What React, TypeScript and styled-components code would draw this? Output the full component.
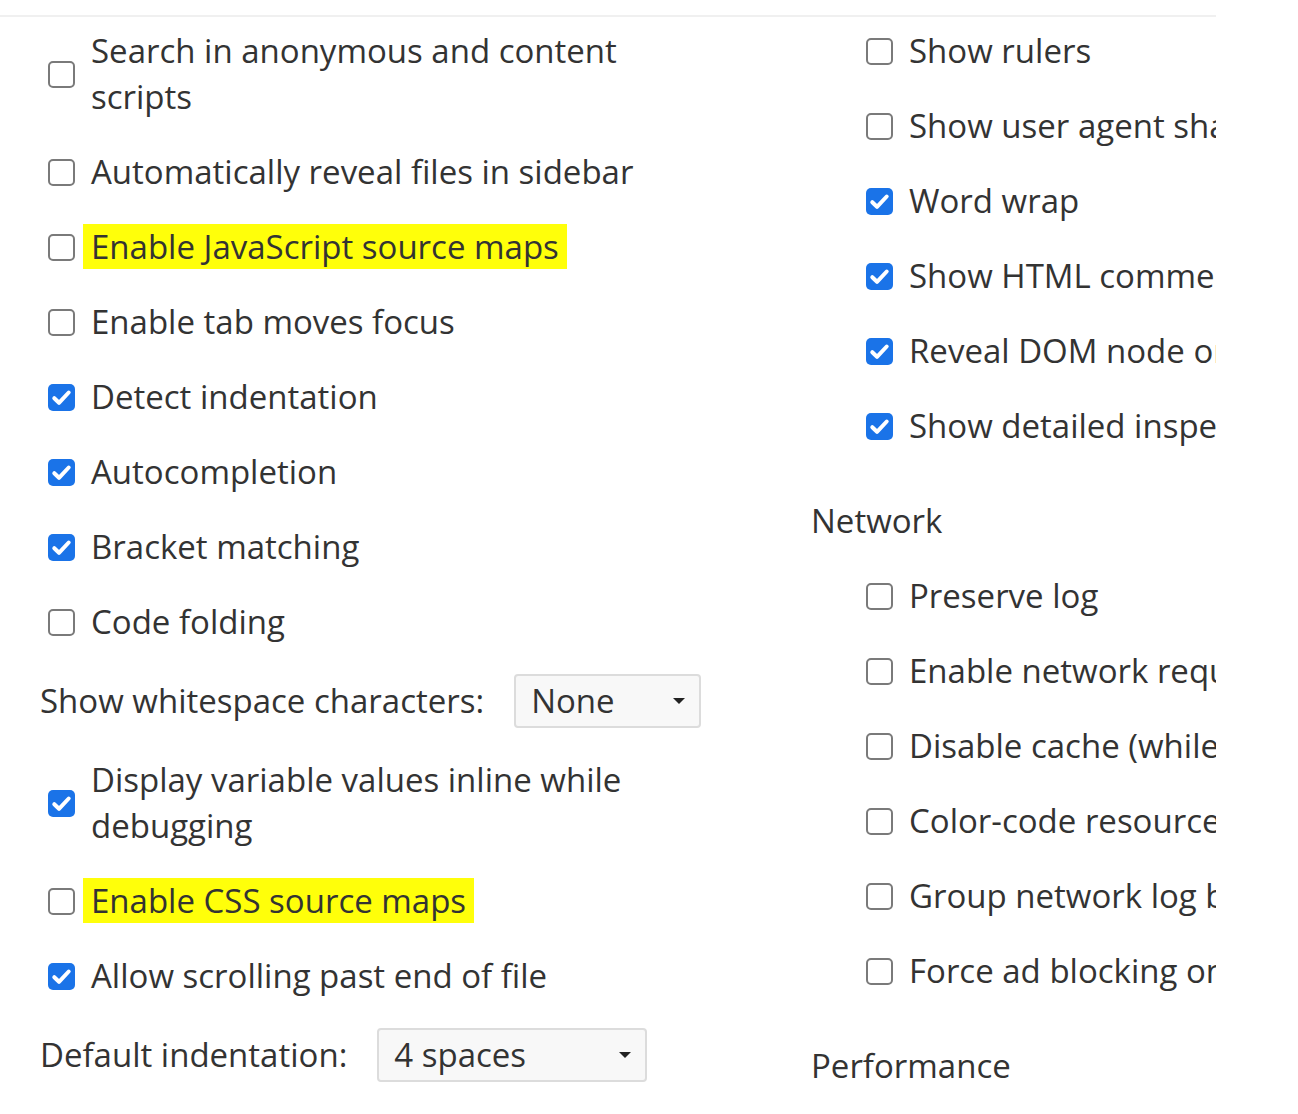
import React from "react";
import styled, { createGlobalStyle } from "styled-components";

const GlobalStyle = createGlobalStyle`
  html, body {
    margin: 0;
    padding: 0;
    background: #ffffff;
  }
  body {
    font-family: "Open Sans", "Noto Sans", "DejaVu Sans", sans-serif;
    color: #333333;
  }
`;

const Page = styled.div`
  width: 1216px;
  margin-top: 15px;
  border-top: 2px solid #f0f0f0;
  overflow: hidden;
  display: grid;
  grid-template-columns: 811px 1fr;
`;

const Column = styled.div<{ $indent: number }>`
  display: flex;
  flex-direction: column;
  min-width: 0;
  --indent: ${(p) => p.$indent}px;
`;

const Row = styled.label`
  display: flex;
  align-items: center;
  gap: 16px;
  padding: 11px 0 18px var(--indent);
  font-size: 33px;
  line-height: 46px;
  white-space: nowrap;
  cursor: default;
`;

const Box = styled.span<{ $checked: boolean }>`
  flex: none;
  width: 27px;
  height: 27px;
  box-sizing: border-box;
  border-radius: 5px;
  border: ${(p) => (p.$checked ? "none" : "2px solid #7a7a7a")};
  background: ${(p) => (p.$checked ? "#1a73e8" : "#ffffff")};
  display: flex;
  align-items: center;
  justify-content: center;
`;

const Text = styled.span<{ $wrap?: boolean }>`
  white-space: ${(p) => (p.$wrap ? "normal" : "nowrap")};
  max-width: ${(p) => (p.$wrap ? "585px" : "none")};
`;

const Highlight = styled.span`
  background: #ffff0a;
  padding: 0 8px;
  margin-left: -8px;
`;

const SelectRow = styled.div`
  display: flex;
  align-items: center;
  gap: 30px;
  padding: 11px 0 18px 40px;
  font-size: 33px;
  line-height: 46px;
  white-space: nowrap;
`;

const SelectBox = styled.div<{ $width: number }>`
  width: ${(p) => p.$width}px;
  height: 54px;
  box-sizing: border-box;
  border: 2px solid #dcdcdc;
  border-radius: 4px;
  background: #f8f8f8;
  display: flex;
  align-items: center;
  justify-content: space-between;
  padding: 0 14px 0 15px;
`;

const Arrow = styled.span`
  width: 0;
  height: 0;
  border-left: 6px solid transparent;
  border-right: 6px solid transparent;
  border-top: 6px solid #222;
`;

const Header = styled.div`
  font-size: 33px;
  line-height: 46px;
  padding: 31px 0 18px 0;
  white-space: nowrap;
`;

type Item =
  | { kind: "check"; label: string; checked?: boolean; highlight?: boolean; wrap?: boolean }
  | { kind: "select"; label: string; value: string; width: number }
  | { kind: "header"; label: string };

const left: Item[] = [
  { kind: "check", label: "Search in anonymous and content scripts", wrap: true },
  { kind: "check", label: "Automatically reveal files in sidebar" },
  { kind: "check", label: "Enable JavaScript source maps", highlight: true },
  { kind: "check", label: "Enable tab moves focus" },
  { kind: "check", label: "Detect indentation", checked: true },
  { kind: "check", label: "Autocompletion", checked: true },
  { kind: "check", label: "Bracket matching", checked: true },
  { kind: "check", label: "Code folding" },
  { kind: "select", label: "Show whitespace characters:", value: "None", width: 187 },
  { kind: "check", label: "Display variable values inline while debugging", checked: true, wrap: true },
  { kind: "check", label: "Enable CSS source maps", highlight: true },
  { kind: "check", label: "Allow scrolling past end of file", checked: true },
  { kind: "select", label: "Default indentation:", value: "4 spaces", width: 270 },
];

const right: Item[] = [
  { kind: "check", label: "Show rulers" },
  { kind: "check", label: "Show user agent shadow DOM" },
  { kind: "check", label: "Word wrap", checked: true },
  { kind: "check", label: "Show HTML comments", checked: true },
  { kind: "check", label: "Reveal DOM node on hover", checked: true },
  { kind: "check", label: "Show detailed inspect tooltip", checked: true },
  { kind: "header", label: "Network" },
  { kind: "check", label: "Preserve log" },
  { kind: "check", label: "Enable network request blocking" },
  { kind: "check", label: "Disable cache (while DevTools is open)" },
  { kind: "check", label: "Color-code resource types" },
  { kind: "check", label: "Group network log by frame" },
  { kind: "check", label: "Force ad blocking on this site" },
  { kind: "header", label: "Performance" },
];

const CheckMark = () => (
  <svg width="27" height="27" viewBox="0 0 27 27" aria-hidden="true">
    <path d="M6.3 14.2l4.7 4.6 9.7-10.3" fill="none" stroke="#ffffff" strokeWidth="4" strokeLinecap="round" strokeLinejoin="round" />
  </svg>
);

const renderItem = (item: Item, i: number) => {
  if (item.kind === "header") return <Header key={i}>{item.label}</Header>;
  if (item.kind === "select")
    return (
      <SelectRow key={i}>
        <span>{item.label}</span>
        <SelectBox $width={item.width}>
          <span>{item.value}</span>
          <Arrow />
        </SelectBox>
      </SelectRow>
    );
  const checked = !!item.checked;
  return (
    <Row key={i}>
      <Box $checked={checked}>{checked && <CheckMark />}</Box>
      <Text $wrap={item.wrap}>
        {item.highlight ? <Highlight>{item.label}</Highlight> : item.label}
      </Text>
    </Row>
  );
};

export default function App() {
  return (
    <>
      <GlobalStyle />
      <Page>
        <Column $indent={48}>{left.map(renderItem)}</Column>
        <Column $indent={55}>{right.map(renderItem)}</Column>
      </Page>
    </>
  );
}
